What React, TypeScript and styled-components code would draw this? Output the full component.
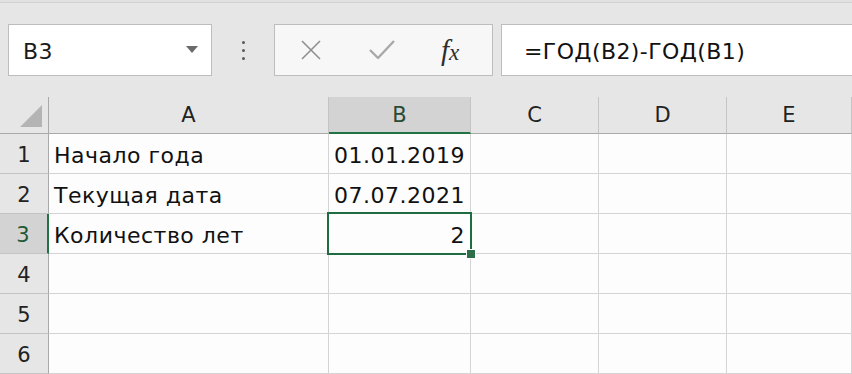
import React from "react";
import styled, { createGlobalStyle } from "styled-components";

const Global = createGlobalStyle`
  html, body { margin: 0; padding: 0; background: #e6e6e6; }
  body { font-family: "DejaVu Sans", "Open Sans", "Liberation Sans", sans-serif; color: #1a1a1a; overflow: hidden; }
  * { box-sizing: border-box; }
`;

const Page = styled.div`
  width: 852px;
  height: 374px;
  overflow: hidden;
  display: flex;
  flex-direction: column;
  background: #e6e6e6;
`;

const TopEdge = styled.div`
  height: 3px;
  border-bottom: 1px solid #d2d2d2;
  background: #e1e1e1;
`;

const FormulaBar = styled.div`
  height: 94px;
  display: flex;
  align-items: flex-start;
  padding: 21px 0 0 8px;
`;

const NameBox = styled.div`
  width: 204px;
  height: 52px;
  background: #ffffff;
  border: 1px solid #bdbdbd;
  display: flex;
  align-items: center;
  justify-content: space-between;
  padding: 2px 13px 0 14px;
  font-size: 22px;
  letter-spacing: 0.3px;
`;

const Caret = styled.div`
  width: 0;
  height: 0;
  margin-top: -4px;
  border-left: 6px solid transparent;
  border-right: 6px solid transparent;
  border-top: 7px solid #6b6b6b;
`;

const Grip = styled.div`
  width: 62px;
  height: 52px;
  display: flex;
  flex-direction: column;
  align-items: center;
  justify-content: center;
  gap: 5px;
`;

const Dot = styled.span`
  width: 3px;
  height: 3px;
  border-radius: 50%;
  background: #5a5a5a;
`;

const ButtonBox = styled.div`
  width: 219px;
  height: 52px;
  background: #f7f7f7;
  border: 1px solid #bdbdbd;
  display: flex;
  align-items: center;
  padding-left: 24px;
  gap: 45px;
`;

const Fx = styled.span`
  font-family: "Liberation Serif", "DejaVu Serif", serif;
  font-style: italic;
  color: #2e2e2e;
  font-size: 29px;
  letter-spacing: -1px;
  & > small {
    font-size: 23px;
    margin-left: 1px;
  }
`;

const FormulaInput = styled.div`
  flex: 1;
  height: 52px;
  margin-left: 8px;
  background: #ffffff;
  border: 1px solid #bdbdbd;
  border-right: none;
  display: flex;
  align-items: center;
  padding: 2px 0 0 22px;
  font-size: 22px;
  letter-spacing: 0.4px;
  color: #111;
`;

const Sheet = styled.div`
  display: grid;
  grid-template-columns: 49px 280px 142px 128px 128px 1fr;
  grid-template-rows: 37px repeat(6, 40px);
  background: #fdfdfd;
`;

const Corner = styled.div`
  background: #e6e6e6;
  border-right: 1px solid #a9a9a9;
  border-bottom: 1px solid #a9a9a9;
  display: flex;
  align-items: flex-end;
  justify-content: flex-end;
  padding: 0 6px 6px 0;
`;

const Triangle = styled.div`
  width: 0;
  height: 0;
  border-left: 22px solid transparent;
  border-bottom: 22px solid #b4b4b4;
`;

const ColHead = styled.div<{ $active?: boolean }>`
  background: ${(p) => (p.$active ? "#d3d3d3" : "#e6e6e6")};
  border-right: 1px solid #c4c4c4;
  border-bottom: ${(p) => (p.$active ? "2px solid #217346" : "1px solid #a9a9a9")};
  display: flex;
  align-items: center;
  justify-content: center;
  font-size: 21px;
  color: ${(p) => (p.$active ? "#2a4a36" : "#222")};
  padding-top: ${(p) => (p.$active ? "1px" : "0")};
`;

const RowHead = styled.div<{ $active?: boolean }>`
  background: ${(p) => (p.$active ? "#d3d3d3" : "#e6e6e6")};
  border-right: ${(p) => (p.$active ? "2px solid #217346" : "1px solid #a9a9a9")};
  border-bottom: 1px solid #c4c4c4;
  display: flex;
  align-items: center;
  justify-content: center;
  font-size: 21px;
  padding: 3px ${(p) => (p.$active ? "1px" : "0")} 0 0;
  color: ${(p) => (p.$active ? "#1e5a37" : "#222")};
`;

const Cell = styled.div<{ $right?: boolean }>`
  position: relative;
  border-right: 1px solid #d4d4d4;
  border-bottom: 1px solid #d4d4d4;
  display: flex;
  align-items: center;
  justify-content: ${(p) => (p.$right ? "flex-end" : "flex-start")};
  padding: 4px 5px 0 5px;
  font-size: 22px;
  letter-spacing: 0.5px;
  color: #111;
  white-space: nowrap;
`;

const Selection = styled.div`
  position: absolute;
  z-index: 2;
  left: -2px;
  top: -2px;
  right: -2px;
  bottom: -2px;
  border: 2px solid #1f6b42;
  pointer-events: none;
`;

const Handle = styled.div`
  position: absolute;
  right: -6px;
  bottom: -6px;
  width: 10px;
  height: 10px;
  background: #2d6e4a;
  border: 1px solid #ffffff;
`;

const cols = ["A", "B", "C", "D", "E"];
const data: Record<string, { v: string; right?: boolean }> = {
  A1: { v: "Начало года" },
  B1: { v: "01.01.2019", right: true },
  A2: { v: "Текущая дата" },
  B2: { v: "07.07.2021", right: true },
  A3: { v: "Количество лет" },
  B3: { v: "2", right: true },
};

const CrossIcon = () => (
  <svg width="24" height="24" viewBox="0 0 24 24">
    <path d="M3 3 L21 21 M21 3 L3 21" stroke="#8f8f8f" strokeWidth="1.6" fill="none" />
  </svg>
);

const CheckIcon = () => (
  <svg width="28" height="24" viewBox="0 0 28 24">
    <path d="M2 12 L10 20 L26 3" stroke="#a8a8a8" strokeWidth="2.4" fill="none" strokeLinejoin="round" />
  </svg>
);

export default function App() {
  return (
    <Page>
      <Global />
      <TopEdge />
      <FormulaBar>
        <NameBox>
          <span>B3</span>
          <Caret />
        </NameBox>
        <Grip>
          <Dot />
          <Dot />
          <Dot />
        </Grip>
        <ButtonBox>
          <CrossIcon />
          <CheckIcon />
          <Fx>
            f<small>x</small>
          </Fx>
        </ButtonBox>
        <FormulaInput>=ГОД(B2)-ГОД(B1)</FormulaInput>
      </FormulaBar>
      <Sheet>
        <Corner>
          <Triangle />
        </Corner>
        {cols.map((c) => (
          <ColHead key={c} $active={c === "B"}>
            {c}
          </ColHead>
        ))}
        {[1, 2, 3, 4, 5, 6].map((r) => (
          <React.Fragment key={r}>
            <RowHead $active={r === 3}>{r}</RowHead>
            {cols.map((c) => {
              const id = `${c}${r}`;
              const d = data[id];
              return (
                <Cell key={id} $right={d?.right}>
                  {d?.v}
                  {id === "B3" && (
                    <Selection>
                      <Handle />
                    </Selection>
                  )}
                </Cell>
              );
            })}
          </React.Fragment>
        ))}
      </Sheet>
    </Page>
  );
}
